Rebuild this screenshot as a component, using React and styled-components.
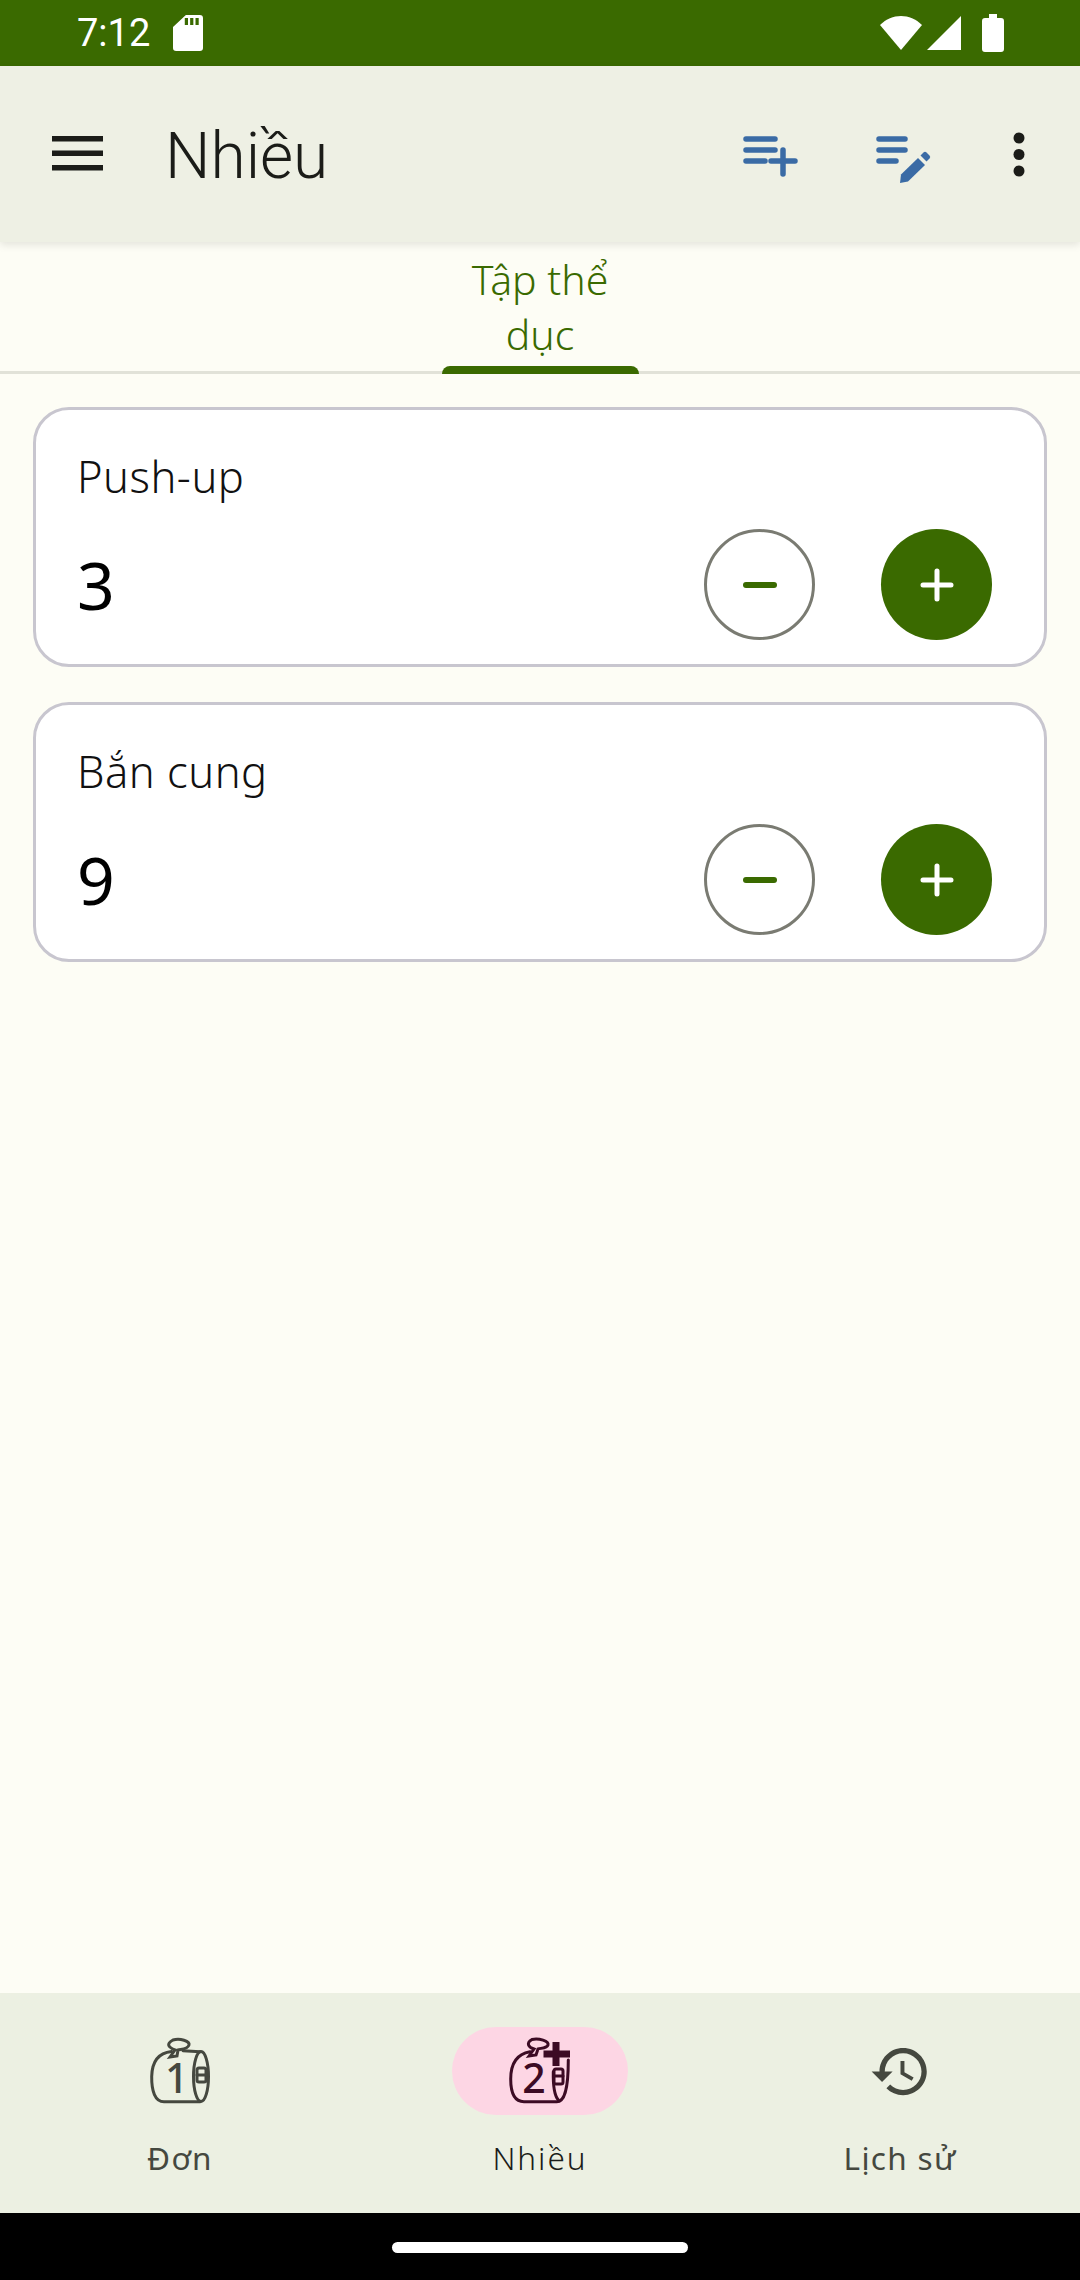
import React from "react";
import styled, { createGlobalStyle } from "styled-components";

const Global = createGlobalStyle`
  html, body { margin: 0; padding: 0; background: #fdfdf5; }
  * { box-sizing: border-box; }
  body { font-family: "Noto Sans", "Open Sans", sans-serif; }
`;

const Screen = styled.div`
  width: 1080px; height: 2280px; display: flex; flex-direction: column; background: #fdfdf5; overflow: hidden;
`;
const StatusBar = styled.div`
  height: 66px; flex: none; background: #3a6a00; color: #fff; display: flex; align-items: center;
  padding: 0 76px 0 77px; font-family: Roboto, sans-serif; font-size: 38px;
`;
const Time = styled.span`margin-right: 23px; line-height: 66px;`;
const StatusRight = styled.div`margin-left: auto; display: flex; align-items: center; gap: 4px;`;
const AppBar = styled.header`
  height: 176px; flex: none; background: #eef0e4; display: flex; align-items: center; position: relative; z-index: 1;
  box-shadow: 0 3px 8px rgba(0,0,0,.10); padding: 0 49px 0 44px; color: #1b1c18;
`;
const Title = styled.h1`
  margin: 5px 0 0 58px; font-family: Roboto, sans-serif; font-size: 64px; font-weight: 300; line-height: 76px; flex: 1;
`;
const Actions = styled.div`display: flex; gap: 70px; align-items: center;`;
const ActionIcon = styled.span`display: flex; color: #3a6ba5;`;
const TabBar = styled.div`
  height: 132px; flex: none; display: flex; justify-content: center; border-bottom: 3px solid #e1e2d8;
`;
const Tab = styled.div`
  position: relative; width: 197px; height: 132px; padding-top: 10px; text-align: center;
  color: #3a6a00; font-size: 41px; font-weight: 300; line-height: 55px;
`;
const Indicator = styled.span`
  position: absolute; left: 0; right: 0; bottom: 0; height: 8px; background: #3a6a00; border-radius: 9px 9px 0 0;
`;
const Main = styled.main`
  flex: 1; padding: 33px 33px; display: flex; flex-direction: column; gap: 35px;
`;
const Card = styled.section`
  height: 260px; background: #fff; border: 3px solid #c8c6cf; border-radius: 36px; padding: 38px 52px 24px 41px;
`;
const CardTitle = styled.div`font-size: 43.5px; font-weight: 300; line-height: 56px; letter-spacing: .5px; color: #111;`;
const Row = styled.div`display: flex; align-items: center; margin-top: 25px; gap: 66px;`;
const Count = styled.div`flex: 1; font-size: 66px; line-height: 111px; color: #000;`;
const RoundButton = styled.button`
  width: 111px; height: 111px; border-radius: 50%; padding: 0; display: flex; align-items: center; justify-content: center;
  border: ${p => (p.$filled ? "none" : "3.2px solid #7a7b72")};
  background: ${p => (p.$filled ? "#3a6a00" : "transparent")};
  color: ${p => (p.$filled ? "#fff" : "#3a6a00")};
`;
const BottomNav = styled.nav`
  height: 220px; flex: none; background: #ecf0e2; display: grid; grid-template-columns: repeat(3, 360px);
`;
const NavItem = styled.div`
  display: flex; flex-direction: column; align-items: center; padding-top: 34px;
  color: ${p => (p.$active ? "#1b1c18" : "#45483f")};
  font-weight: ${p => (p.$active ? 300 : 400)};
  letter-spacing: ${p => (p.$active ? "2px" : "1.3px")};
`;
const Pill = styled.div`
  width: 176px; height: 88px; border-radius: 44px; display: flex; align-items: center; justify-content: center;
  background: ${p => (p.$active ? "#fdd6e4" : "transparent")};
`;
const NavLabel = styled.div`margin-top: 22px; font-size: 31.5px; line-height: 42px;`;
const GestureBar = styled.div`
  height: 67px; flex: none; background: #000; display: flex; align-items: center; justify-content: center;
`;
const Handle = styled.div`width: 296px; height: 11px; border-radius: 6px; background: #fff; margin-top: 2px;`;

const Stroke = ({ w = 63, h = 63, vb = "0 0 63 63", sw = 5.5, children }) => (
  <svg width={w} height={h} viewBox={vb} fill="none" stroke="currentColor" strokeWidth={sw} strokeLinecap="round">
    {children}
  </svg>
);

const Menu = () => (
  <svg width="63" height="63" viewBox="0 0 63 63" fill="#1b1c18">
    <rect x="8" y="13" width="51" height="5.5" />
    <rect x="8" y="27.5" width="51" height="5.5" />
    <rect x="8" y="42" width="51" height="5.5" />
  </svg>
);
const PlaylistAdd = () => (
  <ActionIcon>
    <Stroke>
      <path d="M5 16h29M5 27h29M5 38h19M30 38h24M42 27v24" />
    </Stroke>
  </ActionIcon>
);
const PlaylistEdit = () => (
  <ActionIcon>
    <Stroke>
      <path d="M5 16h26M5 27h26M5 38h17" />
      <path d="M27 51.500 44 35l7 7-17 16.500-8 1.500z" fill="currentColor" stroke="none" />
      <path d="M46.500 32.500l3-3q1.500-1.500 3 0l3 3q1.500 1.500 0 3l-3 3z" fill="currentColor" stroke="none" />
    </Stroke>
  </ActionIcon>
);
const More = () => (
  <svg width="24" height="63" viewBox="0 0 24 63" fill="#1b1c18">
    <circle cx="12" cy="15" r="5.500" />
    <circle cx="12" cy="31.500" r="5.500" />
    <circle cx="12" cy="48" r="5.500" />
  </svg>
);
const BagOne = () => (
  <svg width="72" height="72" viewBox="0 0 72 72" fill="none" stroke="#45483f" strokeWidth="3" strokeLinecap="round">
    <path d="M27.500 16.500C14 18 8 27 7.700 41.500 7.500 56 11 66.700 20 66.700H56" />
    <path d="M39 15.700 56 16.700" />
    <ellipse cx="57" cy="41.500" rx="7.500" ry="25" />
    <path d="M26 22 31 15C24 12 22 9 29 5 36 3 46 6 45 10 44 14 38 14 34 15L33 21z" />
    <rect x="53" y="33" width="9" height="14" rx="2" strokeWidth="3" />
    <path d="M53 40h9" strokeWidth="3" />
    <text x="33.500" y="58" fontFamily="Noto Sans, sans-serif" fontSize="41" fontWeight="500" fill="#45483f" stroke="none" textAnchor="middle">1</text>
  </svg>
);
const BagTwo = () => (
  <svg width="72" height="72" viewBox="0 0 72 72" fill="none" stroke="#3c0b24" strokeWidth="3" strokeLinecap="round">
    <path d="M26 16.700C13 19 6.700 29 6.700 44 6.700 58 10 66.700 20 66.700H52.700C60 66.700 64.300 56 64.300 25" />
    <path d="M49.300 36.700C49 50 50 60 54.300 65" />
    <path d="M25 21 30 14C24 12 22 8 28 4.500 35 3 45 6 44 10 43 13 38 13 34 14L32 20z" />
    <rect x="50" y="34" width="9" height="15" rx="2" strokeWidth="3" />
    <path d="M50 41h9" strokeWidth="3" />
    <path d="M39.500 19h26.500M52 7v24" strokeWidth="7" strokeLinecap="butt" />
    <text x="31" y="58.300" fontFamily="Noto Sans, sans-serif" fontSize="41" fontWeight="500" fill="#3c0b24" stroke="none" textAnchor="middle">2</text>
  </svg>
);
const History = () => (
  <svg width="63" height="63" viewBox="0 0 24 24" fill="#45483f">
    <path d="M13 3c-4.970 0-9 4.030-9 9H1l3.890 3.890.07.140L9 12H6c0-3.870 3.130-7 7-7s7 3.130 7 7-3.130 7-7 7c-1.930 0-3.680-.790-4.940-2.060l-1.420 1.420C8.270 19.990 10.510 21 13 21c4.970 0 9-4.030 9-9s-4.030-9-9-9zm-1 5v5l4.280 2.540.720-1.210-3.500-2.080V8H12z" />
  </svg>
);

const Counter = ({ name, value }) => (
  <Card>
    <CardTitle>{name}</CardTitle>
    <Row>
      <Count>{value}</Count>
      <RoundButton aria-label="minus">
        <Stroke w={40} h={40} vb="0 0 40 40" sw={6}><path d="M6 20h28" /></Stroke>
      </RoundButton>
      <RoundButton $filled aria-label="plus">
        <Stroke w={40} h={40} vb="0 0 40 40" sw={5}><path d="M6 20h28M20 6v28" /></Stroke>
      </RoundButton>
    </Row>
  </Card>
);

export default function App() {
  return (
    <Screen>
      <Global />
      <StatusBar>
        <Time>7:12</Time>
        <svg width="30" height="36" viewBox="0 0 28 36" fill="#fff" preserveAspectRatio="none">
          <path d="M12 0h13a3 3 0 0 1 3 3v30a3 3 0 0 1-3 3H3a3 3 0 0 1-3-3V12zM11 3v7h3V3zm5 0v7h3V3zm5 0v7h3V3z" fillRule="evenodd" />
        </svg>
        <StatusRight>
          <svg width="42" height="36" viewBox="0 0 42 36" fill="#fff"><path d="M21 35 0 10C12-2 30-2 42 10z" /></svg>
          <svg width="36" height="36" viewBox="0 0 36 36" fill="#fff"><path d="M35 1v34H1z" /></svg>
          <svg width="22" height="38" viewBox="0 0 22 38" fill="#fff" style={{ marginLeft: 16 }}><path d="M7 0h8v4h4a3 3 0 0 1 3 3v28a3 3 0 0 1-3 3H3a3 3 0 0 1-3-3V7a3 3 0 0 1 3-3h4z" /></svg>
        </StatusRight>
      </StatusBar>
      <AppBar>
        <Menu />
        <Title>Nhiều</Title>
        <Actions>
          <PlaylistAdd />
          <PlaylistEdit />
          <More />
        </Actions>
      </AppBar>
      <TabBar>
        <Tab>Tập thể dục<Indicator /></Tab>
      </TabBar>
      <Main>
        <Counter name="Push-up" value="3" />
        <Counter name="Bắn cung" value="9" />
      </Main>
      <BottomNav>
        <NavItem><Pill><BagOne /></Pill><NavLabel>Đơn</NavLabel></NavItem>
        <NavItem $active><Pill $active><BagTwo /></Pill><NavLabel>Nhiều</NavLabel></NavItem>
        <NavItem><Pill><History /></Pill><NavLabel>Lịch sử</NavLabel></NavItem>
      </BottomNav>
      <GestureBar><Handle /></GestureBar>
    </Screen>
  );
}
